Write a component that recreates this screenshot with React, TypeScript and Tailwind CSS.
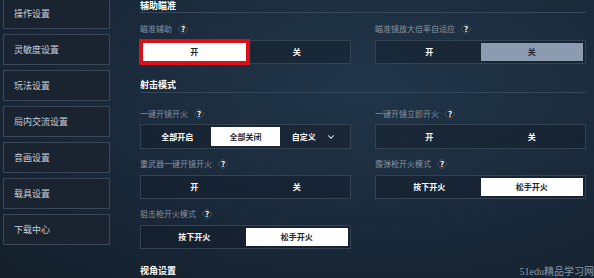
import { ChevronDown } from "lucide-react";

type Option = { label: string; chevron?: boolean };
type Field = {
  label: string;
  options: Option[];
  selected: number;
  // "white" = normal selected cell, "red" = white with red focus ring, "dim" = grey-blue
  look: "white" | "red" | "dim";
};

const menu = ["操作设置", "灵敏度设置", "玩法设置", "局内交流设置", "音画设置", "载具设置", "下载中心"];

const Help = () => (
  <span className="relative ml-[5px] inline-flex h-[12px] w-[12px] items-center justify-center">
    <span className="absolute h-[8px] w-[8px] rotate-45 rounded-[1px] border border-[#3d4b5b] bg-[#1b2634]" />
    <span className="relative text-[8px] font-bold leading-none text-white">?</span>
  </span>
);

const SectionTitle = ({ text, className }: { text: string; className: string }) => (
  <div className={`border-b border-[#36475c] text-[9px] font-bold text-white ${className}`}>
    {text}
  </div>
);

function Segmented({ field, height }: { field: Field; height: string }) {
  return (
    <div className={`flex border border-[#344354] bg-[#111a25]/40 p-[2px] ${height}`}>
      {field.options.map((opt, i) => {
        const on = i === field.selected;
        let cls = "text-white";
        if (on && field.look === "white") cls = "bg-white text-[#1c2735]";
        if (on && field.look === "red") cls = "bg-white text-[#1c2735] ring-[4px] ring-[#d8101a]";
        if (on && field.look === "dim") cls = "bg-[#8c9bb0] text-[#1d2938]";
        return (
          <div
            key={opt.label}
            className={`flex flex-1 items-center justify-center gap-[10px] text-[8px] font-bold ${cls}`}
          >
            {opt.label}
            {opt.chevron && <ChevronDown size={10} strokeWidth={2.5} />}
          </div>
        );
      })}
    </div>
  );
}

function Block({ field, labelTop, boxTop, height }: { field: Field; labelTop: string; boxTop: string; height: string }) {
  return (
    <div>
      <div className={`flex items-center text-[8px] leading-[12px] text-[#8893a2] ${labelTop}`}>
        {field.label}
        <Help />
      </div>
      <div className={boxTop}>
        <Segmented field={field} height={height} />
      </div>
    </div>
  );
}

const onOff = (selected: number, look: Field["look"], label: string): Field => ({
  label,
  options: [{ label: "开" }, { label: "关" }],
  selected,
  look,
});

const fireMode = (label: string): Field => ({
  label,
  options: [{ label: "按下开火" }, { label: "松手开火" }],
  selected: 1,
  look: "white",
});

export default function App() {
  return (
    <div
      className="relative flex h-[278px] w-[594px] overflow-hidden bg-radial-[at_62%_30%] from-[#213649] via-[#1a2a3b] to-[#141e2a]"
      style={{ fontFamily: '"Noto Sans CJK SC", "Noto Sans", sans-serif' }}
    >
      {/* left menu */}
      <div className="-mt-[2px] flex w-[110px] shrink-0 flex-col gap-[5px] pl-[3px]">
        {menu.map((m) => (
          <div
            key={m}
            className="flex h-[31px] items-center border border-[#3c4857] bg-[#1a2431] pl-[10px] text-[9px] text-[#c9d0d9]"
          >
            {m}
          </div>
        ))}
      </div>

      {/* settings */}
      <div className="ml-[30px] w-[446px] shrink-0">
        <SectionTitle text="辅助瞄准" className="leading-[11px] pb-[1px]" />
        <div className="grid grid-cols-2 gap-x-[24px]">
          <Block field={onOff(0, "red", "瞄准辅助")} labelTop="mt-[10px]" boxTop="mt-[5px]" height="h-[24px]" />
          <Block field={onOff(1, "dim", "瞄准镜放大倍率自适应")} labelTop="mt-[10px]" boxTop="mt-[5px]" height="h-[24px]" />
        </div>

        <SectionTitle text="射击模式" className="mt-[15px] leading-[12px] pb-[1px]" />
        <div className="grid grid-cols-2 gap-x-[24px]">
          <Block
            field={{
              label: "一键开镜开火",
              options: [{ label: "全部开启" }, { label: "全部关闭" }, { label: "自定义", chevron: true }],
              selected: 1,
              look: "white",
            }}
            labelTop="mt-[15px]"
            boxTop="mt-[4px]"
            height="h-[25px]"
          />
          <Block field={onOff(-1, "white", "一键开镜立即开火")} labelTop="mt-[15px]" boxTop="mt-[4px]" height="h-[25px]" />
          <Block field={onOff(-1, "white", "重武器一键开镜开火")} labelTop="mt-[9px]" boxTop="mt-[5px]" height="h-[24px]" />
          <Block field={fireMode("霰弹枪开火模式")} labelTop="mt-[9px]" boxTop="mt-[5px]" height="h-[24px]" />
          <Block field={fireMode("狙击枪开火模式")} labelTop="mt-[9px]" boxTop="mt-[5px]" height="h-[24px]" />
        </div>

        <div className="mt-[16px] text-[9px] font-bold leading-[12px] text-white">视角设置</div>
      </div>

      {/* watermark */}
      <div
        className="absolute bottom-0 right-0 text-[10px] leading-[13px] text-[#8d98a5]"
        style={{ fontFamily: '"Liberation Serif", "Noto Sans CJK SC", serif' }}
      >
        51edu精品学习网
      </div>
    </div>
  );
}
